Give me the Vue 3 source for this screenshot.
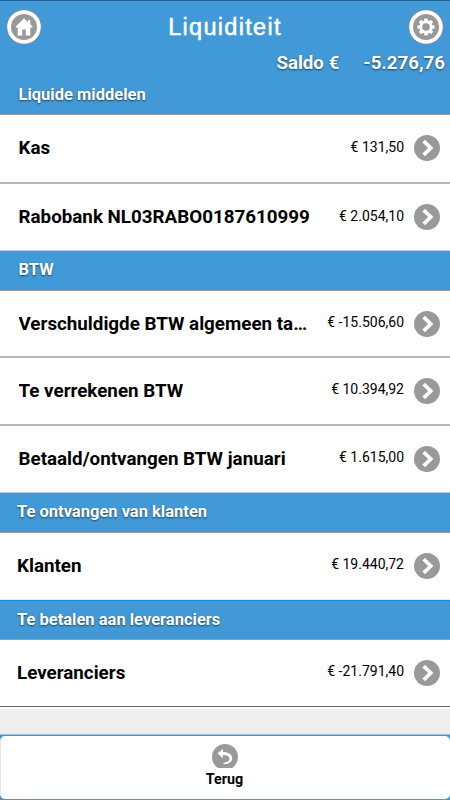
<template>
    <div class="page">
        <header class="top">
            <div class="titlebar">
                <button class="round" aria-label="Home">
                    <svg viewBox="0 0 36 36">
                        <circle cx="18" cy="18" r="17.6" fill="#888" />
                        <circle cx="18" cy="18" r="16.8" fill="#fff" />
                        <circle cx="18" cy="18" r="13" fill="#999" />
                        <path d="M18 9.3 9.6 17.7l.8.8H11.700V26.500h4.500V20.500h3.600v6H24.300V18.500h1.600l.8-.8-2.400-2.400V11h-2.300v2.200z" fill="#fff" />
                    </svg>
                </button>
                <h1>Liquiditeit</h1>
                <button class="round" aria-label="Instellingen">
                    <svg viewBox="0 0 36 36">
                        <circle cx="18" cy="18" r="17.6" fill="#888" />
                        <circle cx="18" cy="18" r="16.8" fill="#fff" />
                        <circle cx="18" cy="18" r="13" fill="#999" />
                        <g fill="#fff">
                            <rect v-for="n in 4" :key="n" x="16.200" y="9.400" width="3.600" height="17.200" rx=".8" :transform="`rotate(${n * 45} 18 18)`" />
                            <circle cx="18" cy="18" r="6.700" />
                        </g>
                        <circle cx="18" cy="18" r="3.800" fill="#999" />
                    </svg>
                </button>
            </div>
            <div class="saldo"><span>Saldo €</span><span>{{ saldo }}</span></div>
        </header>

        <section v-for="group in groups" :key="group.title" :class="['group', group.size]">
            <h2>{{ group.title }}</h2>
            <div v-for="item in group.items" :key="item.name" class="item">
                <span class="name">{{ item.name }}</span>
                <span class="amount">€ {{ item.amount }}</span>
                <svg class="arrow" viewBox="0 0 26 26">
                    <circle cx="13" cy="13" r="13" fill="#999" />
                    <path d="M9.700 6.200 16.700 13 9.700 19.800" fill="none" stroke="#fff" stroke-width="3.700" />
                </svg>
            </div>
        </section>

        <div class="filler"></div>

        <footer>
            <button class="back">
                <svg viewBox="0 0 26 24">
                    <circle cx="13" cy="13" r="13" fill="#999" />
                    <path d="M5.500 9.500 11 4.800V8C16.500 8 20.200 10.500 20.200 14.200C20.200 18 16.500 20.200 11.500 20.200V18.800C15 18.600 17.400 17 17.400 14.600C17.400 12.300 15 11 11 11V14.200z" fill="#fff" />
                </svg>
                <span>Terug</span>
            </button>
        </footer>
    </div>
</template>

<script setup>
const saldo = '-5.276,76'

const groups = [
    {
        title: 'Liquide middelen',
        size: 'first',
        items: [
            { name: 'Kas', amount: '131,50' },
            { name: 'Rabobank NL03RABO0187610999', amount: '2.054,10' },
        ],
    },
    {
        title: 'BTW',
        size: 'wide',
        items: [
            { name: 'Verschuldigde BTW algemeen ta…', amount: '-15.506,60' },
            { name: 'Te verrekenen BTW', amount: '10.394,92' },
            { name: 'Betaald/ontvangen BTW januari', amount: '1.615,00' },
        ],
    },
    {
        title: 'Te ontvangen van klanten',
        size: 'small',
        items: [{ name: 'Klanten', amount: '19.440,72' }],
    },
    {
        title: 'Te betalen aan leveranciers',
        size: 'small',
        items: [{ name: 'Leveranciers', amount: '-21.791,40' }],
    },
]
</script>

<style>
body {
    margin: 0;
}
</style>

<style scoped>
.page {
    display: flex;
    flex-direction: column;
    height: 800px;
    overflow: hidden;
    background: #eee;
    font-family: Roboto, sans-serif;
    color: #000;
}

button {
    border: 0;
    padding: 0;
    background: none;
    font-family: inherit;
    color: inherit;
}

.top {
    box-sizing: border-box;
    height: 75px;
    flex: none;
    background: #4199d8;
    border-top: 1px solid #235f99;
    color: #fff;
}

.titlebar {
    display: flex;
    justify-content: space-between;
    align-items: center;
    height: 51px;
    padding: 0 6px;
}

.round {
    width: 36px;
    height: 36px;
}

.round svg {
    display: block;
    width: 36px;
    height: 36px;
}

h1 {
    margin: 0;
    padding-top: 1px;
    font: 400 23.500px "Liberation Sans", sans-serif;
    letter-spacing: 1.300px;
    -webkit-text-stroke: 0.500px #fff;
}

.saldo {
    display: flex;
    justify-content: flex-end;
    gap: 24px;
    padding-right: 5px;
    font-size: 18.700px;
    font-weight: bold;
    line-height: 22px;
    text-shadow: 0 1px 2px #245;
}

.group {
    flex: none;
}

h2 {
    box-sizing: border-box;
    height: 40px;
    margin: 0;
    padding-left: 18.500px;
    background: #4199d8;
    border-bottom: 1px solid #999;
    color: #fff;
    font-size: 16.500px;
    line-height: 38px;
    text-shadow: 0 1px 2px #245;
}

.first h2 {
    line-height: 40px;
}

.item {
    box-sizing: border-box;
    display: flex;
    align-items: center;
    height: 68px;
    padding: 0 10px 0 18.500px;
    background: #fff;
    border-bottom: 2px solid #b8b8b8;
}

.item:last-child {
    border-bottom: 1px solid #b5cde0;
}

.first .item:nth-child(2) {
    height: 69px;
    padding-bottom: 1px;
}

.first .item:last-child,
.wide .item:last-child {
    height: 67px;
}

.wide .item:nth-child(2) {
    height: 67px;
}

.small h2,
.small .item {
    padding-left: 17px;
}

.small .item {
    height: 67px;
}

.small .item:last-child {
    border-bottom-color: #e4eef5;
}

.group:nth-of-type(4) h2 {
    border-top: 1px solid #128ad6;
    line-height: 37px;
}

.group:nth-of-type(4) .item {
    border-bottom-color: #666;
}

.name {
    flex: 1;
    min-width: 0;
    margin-right: 10px;
    overflow: hidden;
    text-overflow: ellipsis;
    white-space: nowrap;
    font-size: 18.800px;
    font-weight: bold;
}

.amount {
    margin-right: 10px;
    padding-bottom: 3px;
    font-size: 14px;
}

.wide .amount,
.small .amount {
    padding-bottom: 4px;
}

.arrow {
    flex: none;
    width: 26px;
    height: 26px;
}

.filler {
    flex: 1;
    border-top: 2px solid #fff;
}

footer {
    flex: none;
    box-sizing: border-box;
    height: 66px;
    padding-top: 1px;
    background: #4199d8;
    border-top: 1px solid #9cc4e4;
}

.back {
    box-sizing: border-box;
    display: flex;
    flex-direction: column;
    align-items: center;
    width: 100%;
    height: 63px;
    padding: 8px 2px 0 0;
    background: #fff;
    border-left: 1px solid #e6e6e6;
    border-radius: 5px;
    font-size: 14.300px;
    font-weight: bold;
    line-height: 22px;
}

.back svg {
    width: 26px;
    height: 24px;
}
</style>
